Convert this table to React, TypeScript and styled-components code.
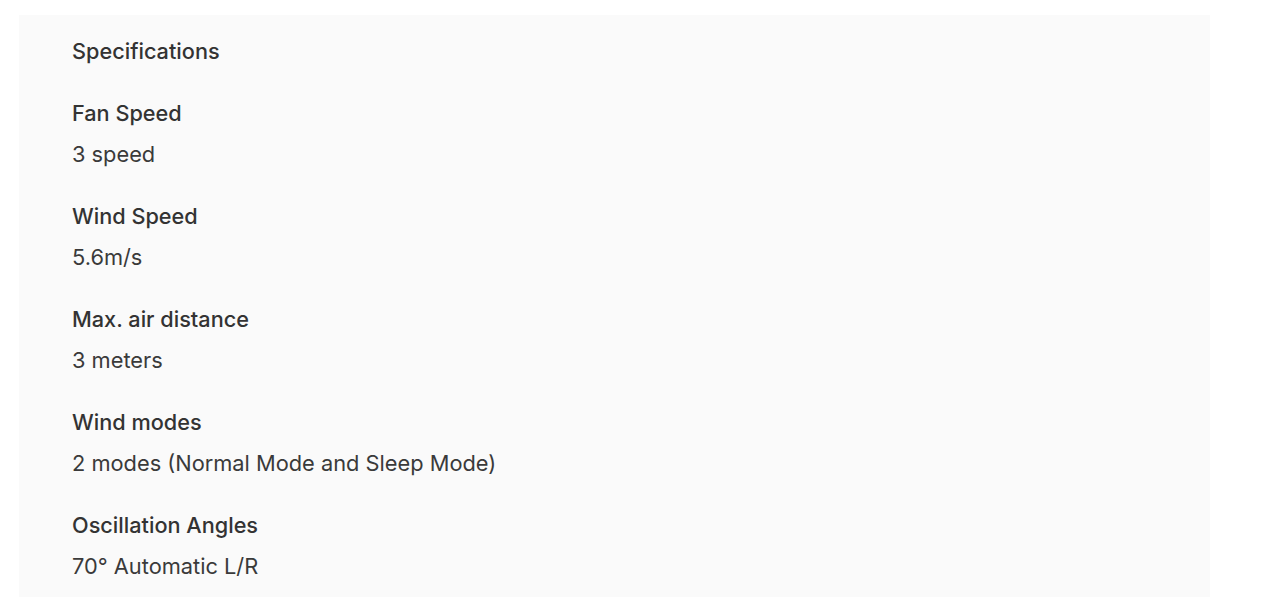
import React from "react";
import styled, { createGlobalStyle } from "styled-components";

const GlobalStyle = createGlobalStyle`
  html, body {
    margin: 0;
    padding: 0;
    background: #ffffff;
  }
  body {
    font-family: Inter, "Noto Sans", Arial, sans-serif;
    -webkit-font-smoothing: antialiased;
  }
`;

const Page = styled.div`
  padding: 15px 57px 0 19px;
`;

const Panel = styled.section`
  box-sizing: border-box;
  width: 1191px;
  height: 582px;
  background: #fafafa;
  padding: 20px 53px 0 53px;
  display: flex;
  flex-direction: column;
  gap: 30px;
`;

const Title = styled.h2`
  margin: 0;
  font-size: 21.7px;
  line-height: 32px;
  font-weight: 500;
  color: #333333;
`;

const Item = styled.div`
  display: flex;
  flex-direction: column;
  gap: 9px;
`;

const Label = styled.div`
  font-size: 21.7px;
  line-height: 32px;
  font-weight: 500;
  color: #333333;
`;

const Value = styled.div`
  font-size: 21.8px;
  line-height: 32px;
  font-weight: 400;
  color: #3a3a3a;
`;

const specs = [
  { label: "Fan Speed", value: "3 speed" },
  { label: "Wind Speed", value: "5.6m/s" },
  { label: "Max. air distance", value: "3 meters" },
  { label: "Wind modes", value: "2 modes (Normal Mode and Sleep Mode)" },
  { label: "Oscillation Angles", value: "70° Automatic L/R" },
];

export default function App() {
  return (
    <>
      <GlobalStyle />
      <Page>
        <Panel>
          <Title>Specifications</Title>
          {specs.map((s) => (
            <Item key={s.label}>
              <Label>{s.label}</Label>
              <Value>{s.value}</Value>
            </Item>
          ))}
        </Panel>
      </Page>
    </>
  );
}
